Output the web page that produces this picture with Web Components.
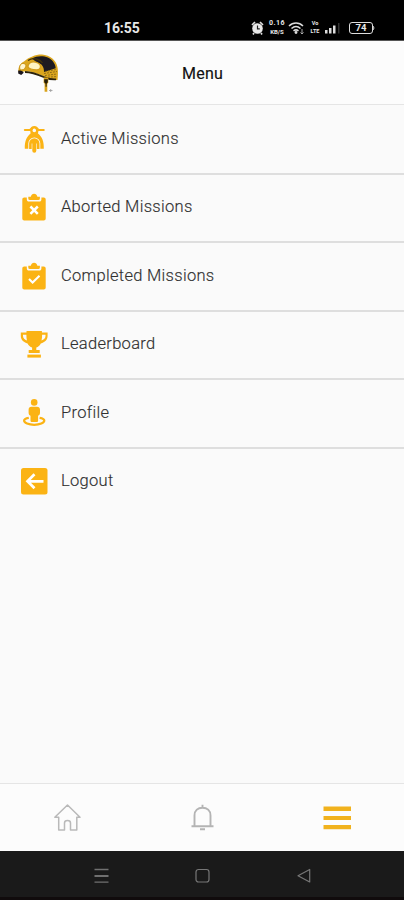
<!DOCTYPE html>
<html lang="en">
<head>
<meta charset="utf-8">
<title>Menu</title>
<style>
html,body{margin:0;height:100%;background:#fafafa}
body{font-family:Roboto,"Liberation Sans",sans-serif;overflow:hidden}
</style>
</head>
<body>
<menu-screen></menu-screen>
<script>
const Y = '#fbb314';
const define = (name, html) => customElements.define(name, class extends HTMLElement {
  constructor() {
    super();
    this.attachShadow({mode: 'open'}).innerHTML = html;
  }
});

const board = `<path fill="${Y}" d="M4.300 4.500H6.800v1.700c0 1.500.8 2.400 2.200 2.400h10.200c1.400 0 2.200-.9 2.200-2.400V4.500h2.300c1.200 0 2 .8 2 2V25.500c0 1.200-.8 2-2 2H4.300c-1.200 0-2-.8-2-2v-19c0-1.200.8-2 2-2z"/>
    <path fill="${Y}" d="M8.300 3.800h2.500c.4-1.800 1.700-3 3.300-3s2.900 1.200 3.300 3h2.500v1.700q0 1.600-1.600 1.600H9.900q-1.600 0-1.600-1.600z"/>`;
const icons = {
  scooter: `<path fill="none" stroke="${Y}" stroke-linecap="round" stroke-width="2.200" d="M4.900 5H10l2-1.300M23.700 5h-5.100l-2-1.300"/>
    <path fill="${Y}" fill-rule="evenodd" d="M14.300 1c2.300 0 4.100 1.700 4.300 3.700l-.7 4.300h-7.200L10 4.700C10.200 2.700 12 1 14.300 1zm0 2.600a1.800 1.800 0 1 0 0 3.600 1.800 1.800 0 0 0 0-3.600z"/>
    <path fill="${Y}" d="M10.600 8.600h7.400c4 3 6.100 8 5.800 15.100h-3.500v-5.200a6 6 0 0 0-12 0v5.200H4.800C4.500 16.600 6.600 11.600 10.600 8.600z"/>
    <path fill="${Y}" d="M9.100 24v-5.500a5.200 5.200 0 0 1 10.400 0V24h-2.600v-5.500h-.6v7.300a2 2 0 0 1-4 0v-7.300h-.6V24z"/>`,
  cross: board + `<path stroke="#fff" stroke-width="2.500" d="m10.400 13.500 7.400 7.400m0-7.400-7.400 7.400"/>`,
  check: board + `<path fill="none" stroke="#fff" stroke-width="2.100" d="m9 17 3.600 3.500 6.900-6.700"/>`,
  trophy: `<path fill="${Y}" fill-rule="evenodd" d="M6.500 1h15.400v1.500h5.700v3.200c0 4-2.700 6.500-6.800 7.700-1 2-2.600 3.500-4.500 4.200v2.500h3.400v3H8.700v-3h3.400v-2.500c-1.900-.7-3.500-2.200-4.500-4.200C3.500 12.200.8 9.700.8 5.700V2.500h5.700zM3 4.700v1.200c0 2.300 1.700 3.700 3.900 4.600-.4-1.800-.5-3.700-.5-5.800zm22.500 0h-3.400c0 2.100-.1 4-.6 5.800 2.300-.9 4-2.300 4-4.600z"/>
    <path fill="${Y}" d="M7.400 24.600h13.500v3H7.400z"/>`,
  person: `<circle cx="14.200" cy="3.400" r="3.300" fill="${Y}"/>
    <path fill="${Y}" d="M11.500 7.700h5.400c2 0 3.100 1.200 3.100 3v3c0 1.500-.7 2.500-1.900 3v4.800c0 1-.6 1.500-1.500 1.500H12c-.9 0-1.500-.5-1.500-1.500v-4.800c-1.200-.5-1.900-1.500-1.900-3v-3c0-1.800 1-3 2.900-3z"/>
    <path fill="none" stroke="${Y}" stroke-width="2.200" d="M8.800 18.900c-2.900.5-4.700 1.400-4.700 2.700 0 2.400 4.500 4.200 10.100 4.200s10.100-1.800 10.100-4.200c0-1.300-1.800-2.200-4.700-2.700"/>`,
  logout: `<rect x="1" y="1" width="26.500" height="26.500" rx="2.500" fill="${Y}"/>
    <path fill="none" stroke="#fff" stroke-width="2.700" d="M23.500 14.300H7.500m7-7-7 7 7 7"/>`
};
customElements.define('menu-icon', class extends HTMLElement {
  connectedCallback() {
    this.attachShadow({mode: 'open'}).innerHTML = `<style>:host{display:block;width:28px;height:28px}svg{display:block;overflow:visible}</style><svg width="28" height="28" viewBox="0 0 28 28">${icons[this.getAttribute('name')]}</svg>`;
  }
});

define('menu-row', `<style>
  :host{display:flex;box-sizing:border-box;height:68.500px;padding:18.500px 20px 0;gap:13px;border-bottom:2px solid #dedede;flex:none}
  :host([last]){border-bottom:0}
  .label{font-size:16.500px;line-height:28px;color:#303030;font-weight:300;-webkit-text-stroke:.15px #303030;letter-spacing:.3px}
  </style><slot name="icon"></slot><div class="label"><slot></slot></div>`);

define('phone-status', `<style>
  :host{display:flex;height:41px;background:#000;color:#e8e8e8;flex:none;align-items:center;box-sizing:border-box;padding:15px 29px 0 104px;justify-content:space-between;border-bottom:1px solid #555}
  .time{font:700 14px/20px Roboto,sans-serif;letter-spacing:-.1px}
  .tools{display:flex;align-items:center;height:20px}
  .stack{display:flex;flex-direction:column;align-items:center;gap:1px;font:700 6px/7px Roboto,sans-serif}
  .stack span{display:block;height:7px}
  .rate{width:18px;margin-left:4px}
  .rate span:first-child{font-size:7px;letter-spacing:.5px}
  .vo{width:10px;margin-left:5px;font-size:5.500px}
  .bat{box-sizing:border-box;width:24px;height:12px;border:1.300px solid #ddd;border-radius:3px;font:700 9.500px/10px Roboto,sans-serif;text-align:center;margin-left:7px}
  svg{display:block}
  </style><div class="time">16:55</div><div class="tools">
  <svg width="13" height="14" viewBox="0 0 13 14"><circle cx="6.500" cy="7.500" r="5.300" fill="#e8e8e8"/><path d="M1 4 4 1m8 3L9 1M3 12l-1 1.500m8-1.500 1 1.500" stroke="#ddd" stroke-width="1.700"/><path d="M6.500 4.500v3.300h2.300" fill="none" stroke="#222" stroke-width="1.200"/></svg>
  <div class="stack rate"><span>0.16</span><span>KB/S</span></div>
  <svg width="17" height="14" viewBox="0 0 17 14" style="margin-left:2px"><g fill="none" stroke="#ddd" stroke-width="1.500"><path d="M1 5c4-4 10-4 14 0M3.500 7.500c3-2.700 6-2.700 9 0M5.500 9.800c2-1.500 3-1.500 5 0"/></g><circle cx="8" cy="11.500" r="1.400" fill="#ddd"/><path d="M14 8v5m-1.500-1.500L14 13l1.500-1.500" fill="none" stroke="#aaa"/></svg>
  <div class="stack vo"><span>Vo</span><span>LTE</span></div>
  <svg width="18" height="12" viewBox="0 0 18 12" style="margin-left:4px"><path fill="#ddd" d="M1 8h2.500v3.500H1zM5 6h2.500v5.500H5zM9 3.500h2.500v8H9z"/><path fill="#333" d="M14 1h1.500v10.500H14z"/></svg>
  <div class="bat">74</div><svg width="2" height="8"><path d="M0 2q2 2 0 4" stroke="#ddd" fill="none"/></svg></div>`);

define('app-header', `<style>
  :host{display:grid;grid-template-columns:1fr auto 1fr;height:64px;box-sizing:border-box;border-bottom:1.500px solid #e5e5e5;background:#fcfcfc;flex:none;align-items:center;padding:2px 15px 0 16px}
  h1{margin:0;padding-top:1px;font-size:16px;line-height:20px;font-weight:400;letter-spacing:.2px;color:#111;-webkit-text-stroke:.15px #111}
  svg{display:block}
  </style><svg width="46" height="44" viewBox="0 0 46 44">
    <path d="M2.500 20C2 15 4 11.500 8 9.500 13 5 20 2.300 26 2.500c8 .5 14.500 6 15.500 13 .7 3 .5 9 0 12.500-4.500.2-9.500-1.500-13.500-3.500C20 20.800 13 18.500 5 20z" fill="#dba61e"/>
    <path d="M16 6.500c7-4 17-2.500 21 3 1.700 2.200 2.600 4.400 2.700 6.700L28 20c0-5-2-8-6-9.500-2-.8-4-2-6-4z" fill="#1d1a20"/>
    <path d="M9 20c8 .2 15 3.500 20 5.600 4 1.600 8 2 11 1.800" fill="none" stroke="#2b220c" stroke-width="1.800"/>
    <path d="m29 19.500 11-2M28 21.500l13-2M29 23.500l12-1.500M32 25.200l9-.7" fill="none" stroke="#806013" stroke-width=".8" stroke-dasharray="2 1"/>
    <path d="M12 8.500c5-3.500 12-1.500 14.500 2.500" fill="none" stroke="#41320b" stroke-width="1.200"/>
    <path d="M6 11.500c-2.300 1-3 4-1.800 6.300 2.500.5 4.400-.4 5.400-2.800.9-2.200-.6-3.800-3.600-3.500z" fill="#fff6d0" stroke="#c58f12" stroke-width=".9"/>
    <path d="M13.500 11.200c3.200-2.300 9.300-1 10.700 2.100.9 2.700-.7 4.700-3.700 4.600-3.500-.1-7.700-1.100-8.300-3-.3-1.200.2-2.700 1.300-3.700z" fill="#fff4c2" stroke="#d19b19" stroke-width="1.200"/>
    <path d="M2.200 18.500c3 0 5 .6 5.500 2.200l-2.500 2.200-3-1.500z" fill="#19151c"/>
    <path d="M27.700 25.500h4.600v5.300l-1 1v8h-2.700v-8l-1-1z" fill="#d9a31b"/><path d="M28.200 27.300h3.600v3l-1.200 1.500v3h-1v-3l-1.400-1.500z" fill="#241d0d"/>
    <path d="M33 38.500h3.500M34.700 37v3" stroke="#999" stroke-width=".8"/>
  </svg><h1>Menu</h1><span></span>`);

define('app-tabs', `<style>
  :host{display:grid;grid-template-columns:1fr 1fr 1fr;place-items:center;height:68px;box-sizing:border-box;border-top:1.500px solid #e5e5e5;background:#fcfcfc;flex:none}
  svg{display:block}
  </style>
  <svg width="28" height="28" viewBox="0 0 28 28" fill="none" stroke="#b9b9b9" stroke-width="1.500" stroke-linejoin="round"><path d="M14.500 1 27 13.200h-3.200v12.700H17.500v-7q0-2.300-3-2.300t-3 2.300v7H5.700V13.200H1.800z"/></svg>
  <svg width="28" height="28" viewBox="0 0 28 28" fill="none" stroke="#b4b4b4" stroke-width="1.900"><path d="M3.500 22.300h22M6.500 22V11.500c0-5 3.500-7.700 8-7.700s8 2.700 8 7.700V22M14.500 4V.8M12 25.200h5"/></svg>
  <svg width="28" height="28" viewBox="0 0 28 28"><path fill="#f1b21d" d="M.5 2.500H28V7H.5zM.5 11.900H28v4.200H.5zM.5 21H28v4.200H.5z"/></svg>`);

define('phone-nav', `<style>
  :host{display:grid;grid-template-columns:repeat(3,101px);justify-content:center;height:49px;background:#1a1a1a;box-sizing:border-box;border-bottom:3px solid #100b0c;flex:none;align-items:center;padding-top:3px}
  svg{display:block;overflow:visible;justify-self:center}
  </style>
  <svg width="16" height="16" viewBox="0 0 16 16" stroke="#707070"><path stroke-width="1.300" d="M1.500 1.500h14M1.500 14.200h14"/><path stroke-width="2" d="M1.500 8h14"/></svg>
  <svg width="16" height="16" viewBox="0 0 16 16" fill="none" stroke="#777" stroke-width="1.200"><rect x="2" y="1.500" width="13" height="12.500" rx="2.500"/></svg>
  <svg width="16" height="16" viewBox="0 0 16 16" fill="none" stroke="#777" stroke-width="1.200"><path stroke-linejoin="round" d="M14.700 1.500v12.500L3 7.700z"/></svg>`);

define('menu-screen', `<style>
  :host{display:flex;flex-direction:column;width:404px;height:900px;background:#fafafa}
  main{flex:1;display:flex;flex-direction:column;padding-top:1px}
  </style><phone-status></phone-status><app-header></app-header><main>
  <menu-row><menu-icon slot="icon" name="scooter"></menu-icon>Active Missions</menu-row>
  <menu-row><menu-icon slot="icon" name="cross"></menu-icon>Aborted Missions</menu-row>
  <menu-row><menu-icon slot="icon" name="check"></menu-icon>Completed Missions</menu-row>
  <menu-row><menu-icon slot="icon" name="trophy"></menu-icon>Leaderboard</menu-row>
  <menu-row><menu-icon slot="icon" name="person"></menu-icon>Profile</menu-row>
  <menu-row last><menu-icon slot="icon" name="logout"></menu-icon>Logout</menu-row>
  </main><app-tabs></app-tabs><phone-nav></phone-nav>`);
</script>
</body>
</html>
